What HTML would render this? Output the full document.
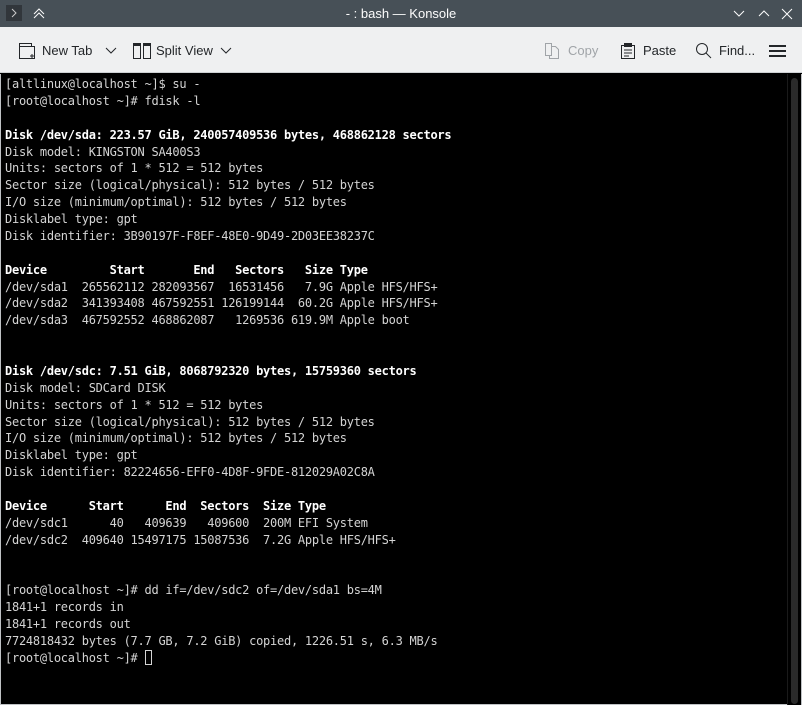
<!DOCTYPE html>
<html><head><meta charset="utf-8"><style>
*{margin:0;padding:0;box-sizing:border-box}
html,body{width:802px;height:705px;overflow:hidden;background:#000;font-family:"Liberation Sans",sans-serif}
#title{position:absolute;left:0;top:0;width:802px;height:27px;background:#475057;color:#fcfcfc;font-size:13px}
#title .t{position:absolute;left:0;width:802px;top:6px;text-align:center}
#tb{position:absolute;left:0;top:27px;width:802px;height:46px;background:#eff0f1;border-bottom:1px solid #cdd0d3;font-size:13px;color:#232629}
.it{position:absolute;top:16px}
#term{position:absolute;left:0;top:74px;width:787px;height:631px;background:#000;border-left:1px solid #bfc2c5;border-bottom:1px solid #bfc2c5}
pre{position:absolute;left:4px;top:2px;font-family:"DejaVu Sans Mono",monospace;font-size:12px;letter-spacing:-0.25px;line-height:16.88px;color:#d4d4d4}
b{color:#fff}
#sb{position:absolute;left:787px;top:74px;width:15px;height:631px;background:#000;border-left:1px solid #1a1a1a;border-right:1px solid #bfc2c5}
#sb div{position:absolute;left:3px;top:4px;width:7px;height:626px;background:#2a2a2a;border-radius:4px}
</style></head><body>
<div id="title">
<div style="position:absolute;left:6px;top:5px;width:16px;height:16px;background:#31363b"></div>
<svg style="position:absolute;left:6px;top:5px" width="16" height="16"><path d="M6 4l4 4-4 4" stroke="#ccc" fill="none"/></svg>
<svg style="position:absolute;left:31px;top:6px" width="16" height="14"><path d="M3 8l5-5 5 5M3 12l5-5 5 5" stroke="#fcfcfc" fill="none"/></svg>
<div class="t">- : bash — Konsole</div>
<svg style="position:absolute;left:731px;top:7px" width="64" height="14"><path d="M3 4l5 5 5-5" stroke="#fcfcfc" fill="none"/><path d="M28 9l5-5 5 5" stroke="#fcfcfc" fill="none"/><path d="M51 2l10 10M61 2l-10 10" stroke="#fcfcfc" fill="none"/></svg>
</div>
<div id="tb">
<svg style="position:absolute;left:18px;top:15px" width="18" height="18"><path d="M1.5 1.5h12v3h3v12h-15z" stroke="#232629" fill="none"/><path d="M1.5 4.5h12" stroke="#232629"/><path d="M12 14h4M14 12v4" stroke="#232629"/></svg>
<span class="it" style="left:42px">New Tab</span>
<svg style="position:absolute;left:105px;top:20px" width="12" height="8"><path d="M1 1l5 5 5-5" stroke="#232629" fill="none"/></svg>
<svg style="position:absolute;left:133px;top:16px" width="18" height="16"><rect x="0.5" y="0.5" width="7" height="15" stroke="#232629" fill="none"/><rect x="10.5" y="0.5" width="7" height="15" stroke="#232629" fill="none"/><path d="M1 2h6M11 2h6" stroke="#232629" stroke-width="2"/></svg>
<span class="it" style="left:156px">Split View</span>
<svg style="position:absolute;left:220px;top:20px" width="12" height="8"><path d="M1 1l5 5 5-5" stroke="#232629" fill="none"/></svg>
<svg style="position:absolute;left:544px;top:15px" width="16" height="18"><path d="M1.5 1.5h6v12h-6zM7.5 4.5h4l3 3v9h-9v-3" stroke="#a0a4a8" fill="none"/></svg>
<span class="it" style="left:568px;color:#a0a4a8">Copy</span>
<svg style="position:absolute;left:620px;top:15px" width="16" height="18"><path d="M1.5 3.5h13v13h-13z" stroke="#232629" fill="none"/><rect x="4" y="1" width="8" height="4" fill="#232629"/><path d="M4 8h8M4 11h8M4 14h5" stroke="#232629"/></svg>
<span class="it" style="left:643px">Paste</span>
<svg style="position:absolute;left:695px;top:15px" width="18" height="18"><circle cx="7" cy="7" r="5.5" stroke="#232629" fill="none"/><path d="M11 11l5 5" stroke="#232629"/></svg>
<span class="it" style="left:719px">Find...</span>
<svg style="position:absolute;left:769px;top:17px" width="18" height="14"><path d="M0 2h17M0 7h17M0 12h17" stroke="#232629" stroke-width="2"/></svg>
</div>
<div id="term"><pre>[altlinux@localhost ~]$ su -
[root@localhost ~]# fdisk -l

<b>Disk /dev/sda: 223.57 GiB, 240057409536 bytes, 468862128 sectors</b>
Disk model: KINGSTON SA400S3
Units: sectors of 1 * 512 = 512 bytes
Sector size (logical/physical): 512 bytes / 512 bytes
I/O size (minimum/optimal): 512 bytes / 512 bytes
Disklabel type: gpt
Disk identifier: 3B90197F-F8EF-48E0-9D49-2D03EE38237C

<b>Device         Start       End   Sectors   Size Type</b>
/dev/sda1  265562112 282093567  16531456   7.9G Apple HFS/HFS+
/dev/sda2  341393408 467592551 126199144  60.2G Apple HFS/HFS+
/dev/sda3  467592552 468862087   1269536 619.9M Apple boot


<b>Disk /dev/sdc: 7.51 GiB, 8068792320 bytes, 15759360 sectors</b>
Disk model: SDCard DISK
Units: sectors of 1 * 512 = 512 bytes
Sector size (logical/physical): 512 bytes / 512 bytes
I/O size (minimum/optimal): 512 bytes / 512 bytes
Disklabel type: gpt
Disk identifier: 82224656-EFF0-4D8F-9FDE-812029A02C8A

<b>Device      Start      End  Sectors  Size Type</b>
/dev/sdc1      40   409639   409600  200M EFI System
/dev/sdc2  409640 15497175 15087536  7.2G Apple HFS/HFS+


[root@localhost ~]# dd if=/dev/sdc2 of=/dev/sda1 bs=4M
1841+1 records in
1841+1 records out
7724818432 bytes (7.7 GB, 7.2 GiB) copied, 1226.51 s, 6.3 MB/s
[root@localhost ~]# <span style="display:inline-block;width:7px;height:15px;border:1px solid #d4d4d4;vertical-align:-3px"></span></pre></div>
<div id="sb"><div></div></div>
</body></html>
